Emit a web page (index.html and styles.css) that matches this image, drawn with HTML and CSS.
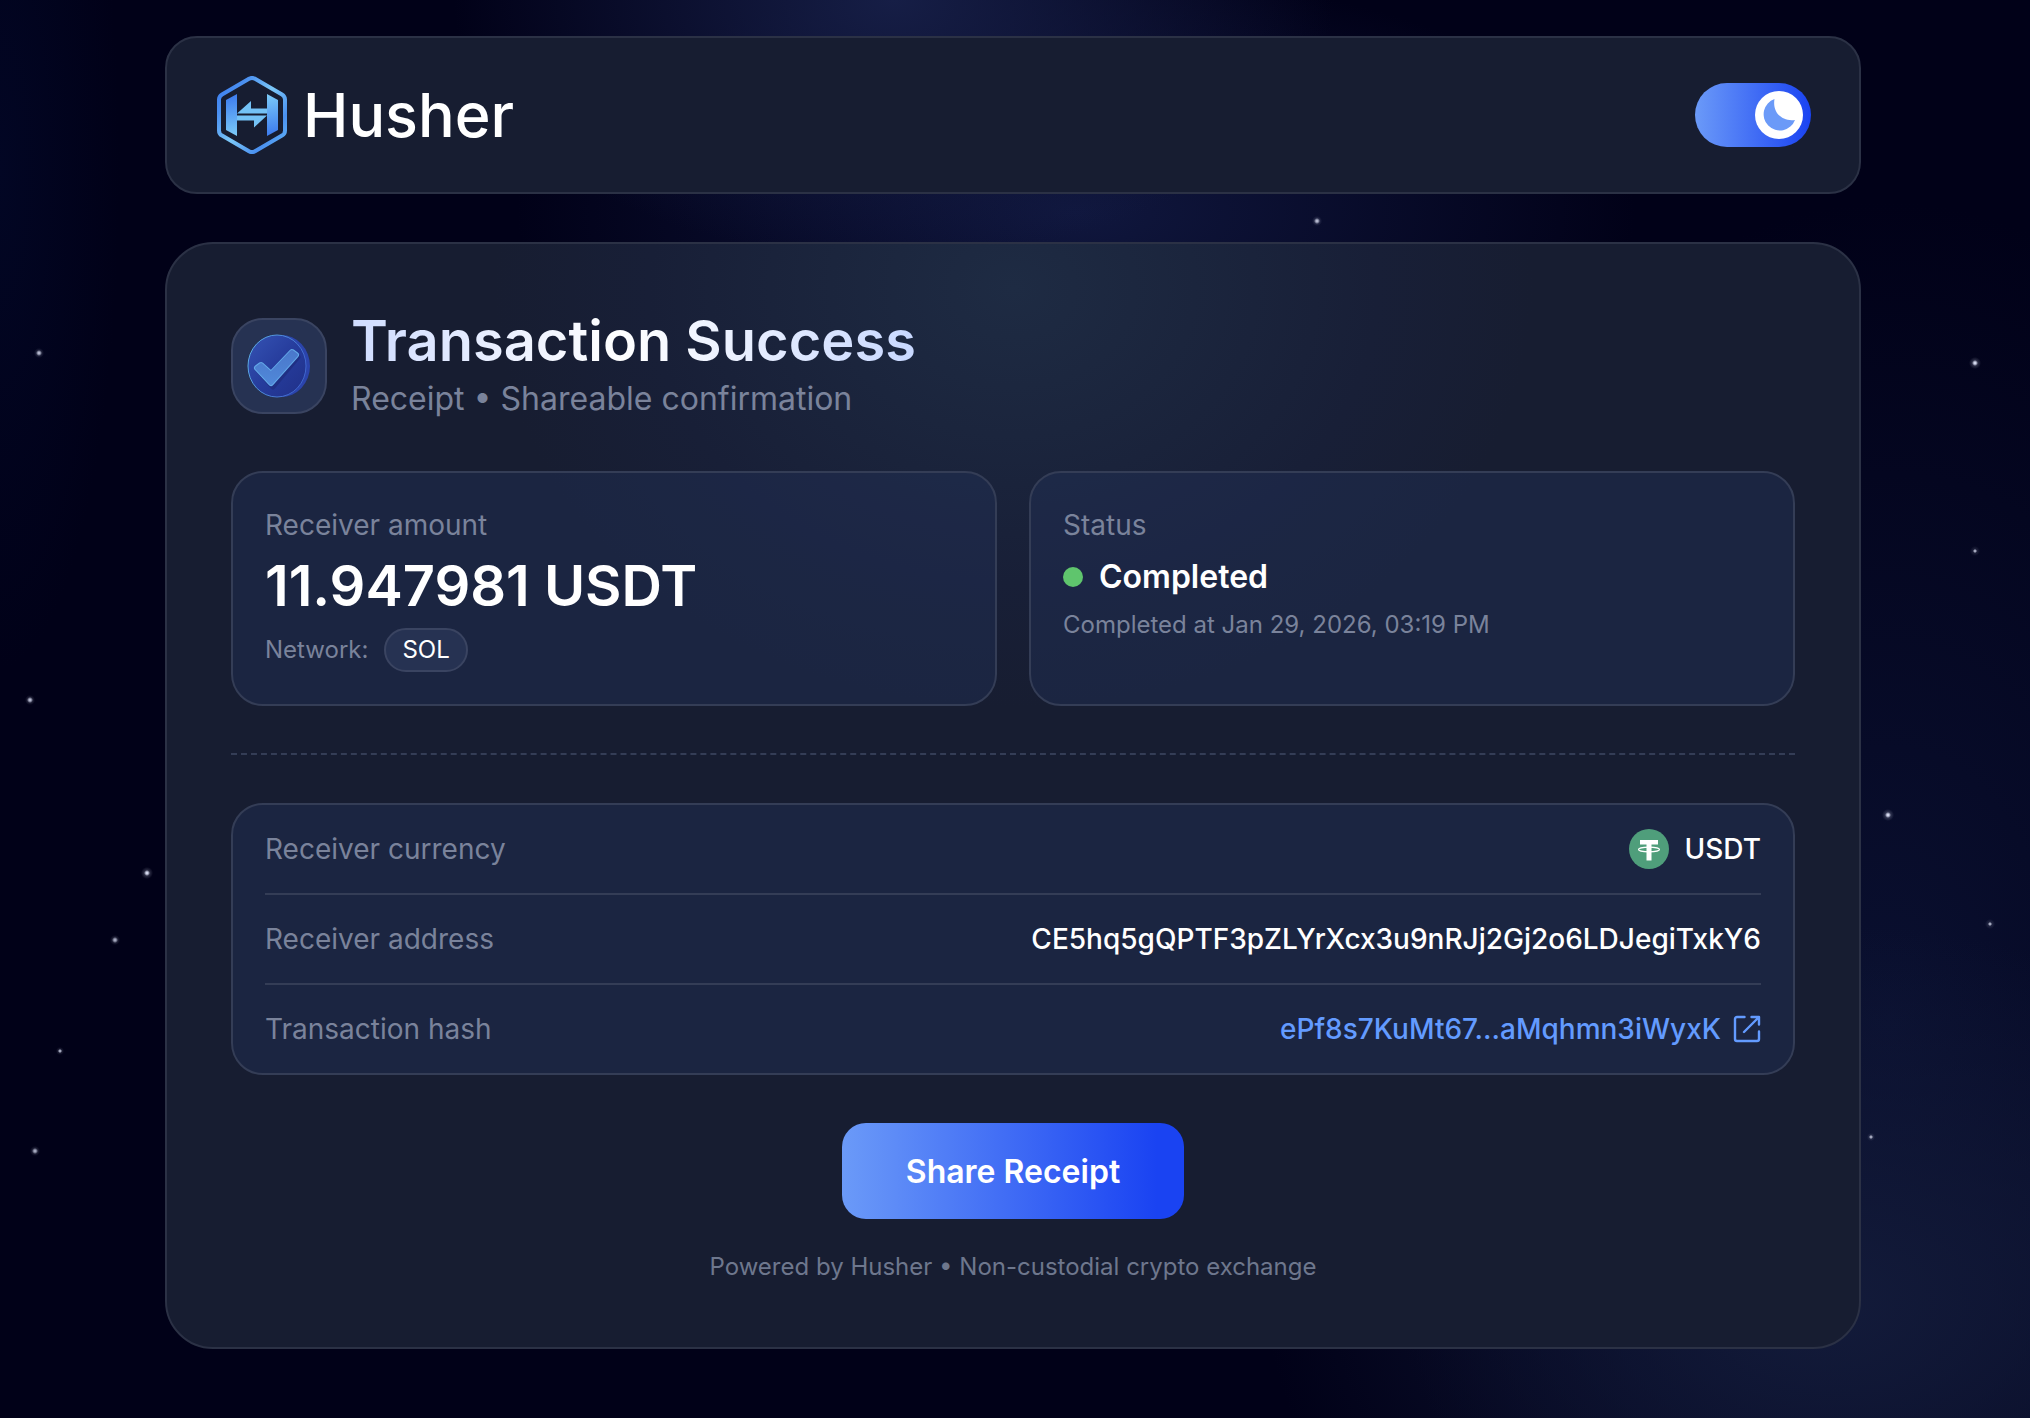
FILE: index.html
```html
<!DOCTYPE html>
<html lang="en">
<head>
    <meta charset="UTF-8">
    <meta name="viewport" content="width=device-width, initial-scale=1.0">
    <title>Husher - Transaction Receipt</title>
    <link rel="stylesheet" href="styles.css">
</head>
<body>
    <div class="sky"></div>

    <div class="container">
        <header class="header">
            <a href="#" class="logo">
                <svg class="logo-mark" viewBox="0 0 70 78" fill="none" aria-hidden="true">
                    <defs>
                        <linearGradient id="hex" x1="0" y1="10" x2="70" y2="66" gradientUnits="userSpaceOnUse">
                            <stop offset="0" stop-color="#3b7cf0"/>
                            <stop offset="0.2" stop-color="#4a8ff0"/>
                            <stop offset="0.5" stop-color="#7cc8f8"/>
                            <stop offset="0.8" stop-color="#4a90f0"/>
                            <stop offset="1" stop-color="#5fb0f5"/>
                        </linearGradient>
                        <linearGradient id="bar1" x1="10" y1="18" x2="18" y2="60" gradientUnits="userSpaceOnUse">
                            <stop stop-color="#3a78ee"/>
                            <stop offset="1" stop-color="#7ccbf8"/>
                        </linearGradient>
                        <linearGradient id="bar2" x1="52" y1="18" x2="60" y2="60" gradientUnits="userSpaceOnUse">
                            <stop stop-color="#7ccbf8"/>
                            <stop offset="1" stop-color="#3a78ee"/>
                        </linearGradient>
                    </defs>
                    <path d="M32 2.8a6 6 0 0 1 6 0l27 15.600a6 6 0 0 1 3 5.200v30.800a6 6 0 0 1-3 5.200l-27 15.600a6 6 0 0 1-6 0l-27-15.600a6 6 0 0 1-3-5.200v-30.800a6 6 0 0 1 3-5.200z" stroke="url(#hex)" stroke-width="4"/>
                    <path d="M9 24l11-6v42l-11-6z" fill="url(#bar1)"/>
                    <path d="M61 24l-11-6v42l11-6z" fill="url(#bar2)"/>
                    <path d="M20 37.500l14-12.500v7.500h16v5z" fill="#74c2f6"/>
                    <path d="M50 39.500l-13 12v-7h-17v-5z" fill="#74c2f6"/>
                </svg>
                <span>Husher</span>
            </a>

            <label class="switch">
                <input type="checkbox" aria-label="Dark mode" checked>
                <span class="knob">
                    <svg viewBox="0 0 48 48" aria-hidden="true"><path d="M19.500 8A16.200 16.200 0 1 0 40 29C28 31 17 22 19.500 8z" fill="#6b9af8"/></svg>
                </span>
            </label>
        </header>

        <main class="receipt">
            <div class="heading">
                <div class="heading-icon">
                    <svg viewBox="0 0 64 64" aria-hidden="true">
                        <defs>
                            <linearGradient id="coin" x1="0" y1="0" x2="1" y2="1">
                                <stop stop-color="#3553b4"/>
                                <stop offset="0.5" stop-color="#263c9c"/>
                                <stop offset="1" stop-color="#203088"/>
                            </linearGradient>
                            <linearGradient id="edge" x1="0" y1="0" x2="1" y2="0.4">
                                <stop stop-color="#5fb4e6"/>
                                <stop offset="1" stop-color="#3f66cc"/>
                            </linearGradient>
                            <linearGradient id="tick" x1="0" y1="0" x2="0" y2="1">
                                <stop stop-color="#4a78cc"/>
                                <stop offset="1" stop-color="#5088d8"/>
                            </linearGradient>
                        </defs>
                        <ellipse cx="34" cy="32" rx="29" ry="31" fill="#2b44ac"/>
                        <ellipse cx="30" cy="32" rx="29" ry="31" fill="url(#coin)" stroke="url(#edge)"/>
                        <path d="M11 36l4-4 10 9 22-22 4 4-25 30z" fill="#1d2a78" stroke="#1d2a78" stroke-width="5" stroke-linejoin="round" opacity="0.6"/>
                        <path d="M10 34l4-3 10 9 21-22 4 3-25 28z" fill="#62a8e8" stroke="#62a8e8" stroke-width="6" stroke-linejoin="round"/>
                        <path d="M10 34l4-3 10 9 21-22 4 3-25 28z" fill="url(#tick)" stroke="url(#tick)" stroke-width="4" stroke-linejoin="round"/>
                    </svg>
                </div>
                <div>
                    <h1>Transaction Success</h1>
                    <p>Receipt • Shareable confirmation</p>
                </div>
            </div>

            <div class="cards">
                <section class="card">
                    <h2>Receiver amount</h2>
                    <p class="amount">11.947981 USDT</p>
                    <p class="network">Network: <span class="pill">SOL</span></p>
                </section>
                <section class="card">
                    <h2>Status</h2>
                    <p class="status"><span class="dot"></span>Completed</p>
                    <p class="note">Completed at Jan 29, 2026, 03:19 PM</p>
                </section>
            </div>

            <hr>

            <div class="details">
                <table>
                    <tr>
                        <th scope="row">Receiver currency</th>
                        <td>
                            <span class="value">
                                <svg class="coin" viewBox="0 0 40 40" aria-hidden="true">
                                    <circle cx="20" cy="20" r="20" fill="#4f9e7b"/>
                                    <path d="M11 11h18v4.500h-6.500v16h-5v-16h-6.500z" fill="#fff"/>
                                    <ellipse cx="20" cy="20.500" rx="10.500" ry="2.300" fill="none" stroke="#fff" stroke-width="1.200"/>
                                </svg>
                                USDT
                            </span>
                        </td>
                    </tr>
                    <tr>
                        <th scope="row">Receiver address</th>
                        <td>CE5hq5gQPTF3pZLYrXcx3u9nRJj2Gj2o6LDJegiTxkY6</td>
                    </tr>
                    <tr>
                        <th scope="row">Transaction hash</th>
                        <td>
                            <a href="#" class="value hash">
                                ePf8s7KuMt67...aMqhmn3iWyxK
                                <svg viewBox="0 0 28 28" fill="none" stroke="currentColor" stroke-width="2.400" stroke-linecap="round" stroke-linejoin="round" aria-hidden="true">
                                    <path d="M11.500 2H4a2 2 0 0 0-2 2v20a2 2 0 0 0 2 2h20a2 2 0 0 0 2-2v-7.500"/>
                                    <path d="M18.500 2H26v7.500M26 2L11 17"/>
                                </svg>
                            </a>
                        </td>
                    </tr>
                </table>
            </div>

            <button type="button" class="share">Share Receipt</button>
            <p class="powered">Powered by Husher • Non-custodial crypto exchange</p>
        </main>
    </div>
</body>
</html>
```

FILE: styles.css
```css
*{
    margin: 0;
    padding: 0;
    box-sizing: border-box;
}

body{
    position: relative;
    min-height: 100vh;
    padding: 36px 4px 64px 0;
    background: #010118;
    color: #fff;
    font-family: Inter, "Liberation Sans", sans-serif;
    font-size: 28px;
    line-height: 40px;
}

/* night sky: stars first, glows under them */
.sky{
    position: absolute;
    inset: 0;
    z-index: -1;
    background:
        radial-gradient(circle at 1317px 221px, #b4b8ce 1px, #c4c8de22 3px, transparent 5px),
        radial-gradient(circle at 39px 353px, #b4b8ce 1px, #c4c8de22 3px, transparent 5px),
        radial-gradient(circle at 30px 700px, #b4b8ce 1px, #c4c8de22 3px, transparent 5px),
        radial-gradient(circle at 147px 873px, #d4d8ee 1px, #c4c8de33 3px, transparent 6px),
        radial-gradient(circle at 115px 940px, #a4a8be 1px, #c4c8de22 3px, transparent 5px),
        radial-gradient(circle at 60px 1051px, #a4a8be 1px, #c4c8de22 2px, transparent 4px),
        radial-gradient(circle at 35px 1151px, #a4a8be 1px, #c4c8de22 3px, transparent 5px),
        radial-gradient(circle at 1975px 363px, #d4d8ee 1px, #c4c8de33 3px, transparent 6px),
        radial-gradient(circle at 1975px 551px, #a4a8be 1px, #c4c8de22 2px, transparent 5px),
        radial-gradient(circle at 1888px 815px, #d4d8ee 1px, #c4c8de33 3px, transparent 6px),
        radial-gradient(circle at 1990px 924px, #a4a8be 1px, #c4c8de22 2px, transparent 5px),
        radial-gradient(circle at 1871px 1137px, #a4a8be 1px, #c4c8de22 2px, transparent 4px),
        radial-gradient(ellipse 440px 260px at 44% 0%, #161e46, transparent),
        radial-gradient(ellipse 560px 240px at 53% 15%, #10173e, transparent),
        radial-gradient(ellipse 560px 380px at 90% 92%, #131b3a, transparent),
        radial-gradient(ellipse 520px 820px at 93% 72%, #0a1030, transparent),
        radial-gradient(ellipse 120px 500px at 0% 12%, #020624, transparent);
}

.container{
    max-width: 1696px;
    margin: 0 auto;
}

.header{
    display: flex;
    align-items: center;
    justify-content: space-between;
    height: 158px;
    padding: 0 48px 0 50px;
    margin-bottom: 48px;
    background: #171d31;
    border: 2px solid #2b3145;
    border-radius: 32px;
}

.logo{
    display: flex;
    align-items: center;
    gap: 16px;
    color: #fff;
    font-size: 61px;
    font-weight: 500;
    text-decoration: none;
}

.logo-mark{
    width: 70px;
    height: 78px;
}

.switch{
    position: relative;
    display: flex;
}

.switch input{
    appearance: none;
    width: 116px;
    height: 64px;
    border-radius: 32px;
    background: linear-gradient(90deg, #6b9af8, #1a43f2);
    cursor: pointer;
}

.knob{
    position: absolute;
    top: 8px;
    right: 8px;
    width: 48px;
    height: 48px;
    border-radius: 50%;
    background: #fff;
    pointer-events: none;
}

.knob svg{
    display: block;
}

.receipt{
    display: flex;
    flex-direction: column;
    padding: 64px;
    background: radial-gradient(ellipse 520px 420px at 50% 4%, #1e2b43, #181f37 70%, #171d31);
    border: 2px solid #2b3145;
    border-radius: 48px;
}

.heading{
    display: flex;
    align-items: center;
    gap: 24px;
    margin-bottom: 48px;
}

.heading-icon{
    display: flex;
    align-items: center;
    justify-content: center;
    width: 96px;
    height: 96px;
    background: #263252;
    border: 2px solid #3a4461;
    border-radius: 32px;
}

.heading-icon svg{
    width: 64px;
    height: 64px;
}

.heading h1{
    font-size: 56px;
    font-weight: 600;
    line-height: 67px;
    background: linear-gradient(90deg, #cfdcff, #fff 48%, #c8d8ff);
    background-clip: text;
    color: transparent;
}

.heading p{
    color: #7a839b;
    font-size: 32px;
    line-height: 48px;
}

.cards{
    display: grid;
    grid-template-columns: 1fr 1fr;
    gap: 32px;
}

.card,
.details{
    background: rgba(35, 50, 90, 0.4);
    border: 2px solid #343d56;
    border-radius: 32px;
    padding: 32px;
}

.card h2{
    color: #7a839b;
    font-size: 28px;
    font-weight: 400;
}

.amount{
    font-size: 56px;
    font-weight: 600;
    line-height: 67px;
    margin: 8px 0;
}

.network,
.note{
    color: #7a839b;
    font-size: 24px;
}

.network{
    display: flex;
    align-items: center;
    gap: 16px;
}

.pill{
    padding: 0 16px;
    color: #fff;
    background: #263252;
    border: 2px solid #3a4461;
    border-radius: 22px;
}

.status{
    display: flex;
    align-items: center;
    gap: 16px;
    margin: 12px 0 8px;
    font-size: 32px;
    font-weight: 600;
}

.dot{
    width: 20px;
    height: 20px;
    border-radius: 50%;
    background: #5fc56d;
}

hr{
    border: 0;
    border-top: 2px dashed #343d56;
    margin: 47px 0 48px;
}

.details{
    padding: 0 32px;
}

table{
    width: 100%;
    border-spacing: 0;
}

th,
td{
    height: 90px;
    border-bottom: 2px solid #343d56;
}

tr:last-child th,
tr:last-child td{
    height: 88px;
    border-bottom: 0;
}

th{
    color: #7a839b;
    font-weight: 400;
    text-align: left;
}

td{
    font-weight: 500;
    text-align: right;
}

.value{
    display: flex;
    align-items: center;
    justify-content: flex-end;
    gap: 16px;
}

.coin{
    width: 40px;
    height: 40px;
}

.hash{
    gap: 12px;
    color: #639bff;
    text-decoration: none;
}

.hash svg{
    width: 28px;
    height: 28px;
}

.share{
    align-self: center;
    height: 96px;
    margin: 48px 0 32px;
    padding: 0 64px;
    border: 0;
    border-radius: 24px;
    background: linear-gradient(90deg, #6b9af8, #1a43f2 92%);
    color: #fff;
    font: 600 32px Inter, "Liberation Sans", sans-serif;
    cursor: pointer;
}

.powered{
    color: #6e778d;
    font-size: 24px;
    line-height: 32px;
    text-align: center;
}
```
